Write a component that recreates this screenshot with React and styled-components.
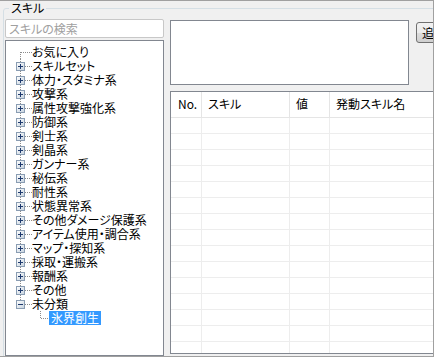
import React from "react";
import styled, { createGlobalStyle } from "styled-components";

const GlobalStyle = createGlobalStyle`
  html, body {
    margin: 0;
    padding: 0;
    background: #f0f0f0;
  }
  * {
    box-sizing: border-box;
  }
`;

const FONT = `"Noto Sans CJK JP", "Liberation Sans", sans-serif`;

const Frame = styled.div`
  width: 434px;
  height: 357px;
  overflow: hidden;
  background: #f0f0f0;
  border-top: 1px solid #a0a0a0;
  border-right: 1px solid #a0a0a0;
  border-bottom: 1px solid #a0a0a0;
  padding-left: 3px;
  font-family: ${FONT};
  font-size: 12px;
  font-feature-settings: "palt";
  color: #000;
`;

const GroupBox = styled.fieldset`
  margin: 0;
  padding: 0 0 20px 0;
  width: 480px;
  border: 1px solid #d5dfe5;
  border-radius: 3px;
  display: flex;
  gap: 6px;
  min-width: 0;
`;

const GroupTitle = styled.legend`
  margin-left: 5px;
  padding: 0 2px;
  height: 14px;
  line-height: 14px;
  font-size: 12px;
`;

const LeftColumn = styled.div`
  margin: 4px 0 0 1px;
  width: 159px;
  display: flex;
  flex-direction: column;
  gap: 2px;
`;

const SearchBox = styled.input`
  width: 159px;
  height: 19px;
  margin: 0;
  padding: 0 3px;
  border: 1px solid #c8c8c8;
  border-radius: 2px;
  background: #fff;
  font-family: ${FONT};
  font-size: 12px;
  font-feature-settings: "palt";
  outline: none;

  &::placeholder {
    color: #a0a0a0;
  }
`;

const TreeView = styled.div`
  height: 316px;
  border: 1px solid #828790;
  background: #fff;
  padding-top: 4px;
  overflow: hidden;
`;

const TreeRow = styled.div`
  display: flex;
  align-items: center;
  height: 14px;
  white-space: nowrap;
`;

const TreeLabel = styled.span`
  display: inline-block;
  height: 14px;
  line-height: 14px;
  padding: 0 ${(p) => (p.$selected ? "2px" : "0")};
  background: ${(p) => (p.$selected ? "#3399ff" : "transparent")};
  color: ${(p) => (p.$selected ? "#fff" : "#000")};
`;

const RightColumn = styled.div`
  margin-top: 5px;
  display: flex;
  flex-direction: column;
  gap: 6px;
`;

const TopRow = styled.div`
  display: flex;
  align-items: flex-start;
  gap: 7px;
`;

const MemoBox = styled.textarea`
  width: 239px;
  height: 65px;
  margin: 0;
  border: 1px solid #828790;
  background: #fff;
  resize: none;
  outline: none;
`;

const AddButton = styled.button`
  margin-top: 2px;
  width: 75px;
  height: 21px;
  padding: 0 0 0 5px;
  text-align: left;
  border: 1px solid #707070;
  border-radius: 3px;
  background: linear-gradient(#f2f2f2 0%, #ebebeb 50%, #dddddd 51%, #cfcfcf 100%);
  font-family: ${FONT};
  font-size: 12px;
  color: #000;
`;

const ListView = styled.div`
  width: 300px;
  height: 263px;
  border: 1px solid #828790;
  background: #fff;
  overflow: hidden;
`;

const COLUMNS = "31px 88px 40px 1fr";

const HeaderRow = styled.div`
  display: grid;
  grid-template-columns: ${COLUMNS};
  height: 26px;
  border-bottom: 1px solid #e5e5e5;
`;

const HeaderCell = styled.div`
  padding: 5px 0 0 ${(p) => p.$pad || 6}px;
  line-height: 14px;
  border-right: 1px solid #e5e5e5;
`;

const DataRow = styled.div`
  display: grid;
  grid-template-columns: ${COLUMNS};
  height: 16px;
  border-bottom: 1px solid #ededed;
`;

const DataCell = styled.div`
  border-right: 1px solid #ededed;
`;

const LINE = "#8c8c8c";

// the dotted connector + expander box drawn for one tree row
const TreeGlyph = ({ kind, first, last, child }) => {
  if (child) {
    return (
      <svg width="43" height="14" style={{ display: "block", flex: "none" }}>
        <line x1="34.5" y1="0" x2="34.5" y2="7" stroke={LINE} strokeDasharray="1 1" />
        <line x1="35" y1="7.5" x2="43" y2="7.5" stroke={LINE} strokeDasharray="1 1" />
      </svg>
    );
  }
  return (
    <svg width="26" height="14" style={{ display: "block", flex: "none" }}>
      <defs>
        <linearGradient id="boxfill" x1="0" y1="0" x2="1" y2="1">
          <stop offset="0" stopColor="#ffffff" />
          <stop offset="1" stopColor="#c6d2de" />
        </linearGradient>
      </defs>
      <line
        x1="14.5"
        y1={first ? 7 : 0}
        x2="14.5"
        y2={last ? 8 : 14}
        stroke={LINE}
        strokeDasharray="1 1"
      />
      <line
        x1={kind === "leaf" ? 15 : 19}
        y1="7.5"
        x2="26"
        y2="7.5"
        stroke={LINE}
        strokeDasharray="1 1"
      />
      {kind !== "leaf" && (
        <g shapeRendering="crispEdges">
          <rect x="10.5" y="3.5" width="8" height="8" fill="url(#boxfill)" stroke="#8a9db3" />
          <line x1="12" y1="7.5" x2="17" y2="7.5" stroke="#1e3a6e" />
          {kind === "plus" && <line x1="14.5" y1="5" x2="14.5" y2="10" stroke="#1e3a6e" />}
        </g>
      )}
    </svg>
  );
};

const nodes = [
  { label: "お気に入り", kind: "leaf" },
  { label: "スキルセット", kind: "plus" },
  { label: "体力・スタミナ系", kind: "plus" },
  { label: "攻撃系", kind: "plus" },
  { label: "属性攻撃強化系", kind: "plus" },
  { label: "防御系", kind: "plus" },
  { label: "剣士系", kind: "plus" },
  { label: "剣晶系", kind: "plus" },
  { label: "ガンナー系", kind: "plus" },
  { label: "秘伝系", kind: "plus" },
  { label: "耐性系", kind: "plus" },
  { label: "状態異常系", kind: "plus" },
  { label: "その他ダメージ保護系", kind: "plus" },
  { label: "アイテム使用・調合系", kind: "plus" },
  { label: "マップ・探知系", kind: "plus" },
  { label: "採取・運搬系", kind: "plus" },
  { label: "報酬系", kind: "plus" },
  { label: "その他", kind: "plus" },
  { label: "未分類", kind: "minus" },
];

const headers = [
  { label: "No.", pad: 7 },
  { label: "スキル" },
  { label: "値" },
  { label: "発動スキル名" },
];

export default function App() {
  return (
    <>
      <GlobalStyle />
      <Frame>
        <GroupBox>
          <GroupTitle>スキル</GroupTitle>
          <LeftColumn>
            <SearchBox placeholder="スキルの検索" />
            <TreeView>
              {nodes.map((node, i) => (
                <TreeRow key={node.label}>
                  <TreeGlyph kind={node.kind} first={i === 0} last={i === nodes.length - 1} />
                  <TreeLabel>{node.label}</TreeLabel>
                </TreeRow>
              ))}
              <TreeRow>
                <TreeGlyph child />
                <TreeLabel $selected>氷界創生</TreeLabel>
              </TreeRow>
            </TreeView>
          </LeftColumn>
          <RightColumn>
            <TopRow>
              <MemoBox />
              <AddButton>追加</AddButton>
            </TopRow>
            <ListView>
              <HeaderRow>
                {headers.map((h) => (
                  <HeaderCell key={h.label} $pad={h.pad}>
                    {h.label}
                  </HeaderCell>
                ))}
              </HeaderRow>
              {Array.from({ length: 15 }, (_, i) => (
                <DataRow key={i}>
                  <DataCell />
                  <DataCell />
                  <DataCell />
                  <DataCell />
                </DataRow>
              ))}
            </ListView>
          </RightColumn>
        </GroupBox>
      </Frame>
    </>
  );
}
